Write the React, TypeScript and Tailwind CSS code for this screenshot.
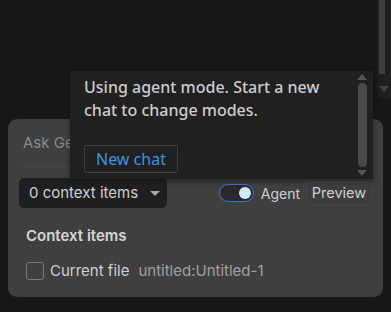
function Toggle() {
  return (
    <div className="w-[35px] h-[18px] rounded-full border-[1.5px] border-[#2f7ae5] bg-[#2a2a2a] flex items-center justify-end pr-[2px]">
      <div className="w-[12px] h-[12px] rounded-full bg-[#d4e8ff]" />
    </div>
  );
}

function Scrollbar() {
  return (
    <div className="flex flex-col items-center w-[12px] h-full py-[3px] gap-[3px]">
      <div className="w-0 h-0 border-l-[5px] border-r-[5px] border-b-[6px] border-l-transparent border-r-transparent border-b-[#555]" />
      <div className="flex-1 w-[9px] rounded-full bg-[#4a4a4a]" />
      <div className="w-0 h-0 border-l-[5px] border-r-[5px] border-t-[6px] border-l-transparent border-r-transparent border-t-[#555]" />
    </div>
  );
}

export default function App() {
  return (
    <div
      className="relative w-[391px] h-[312px] bg-[#181818] overflow-hidden"
      style={{ fontFamily: "Inter, 'Noto Sans', sans-serif" }}
    >
      {/* editor scrollbar on the right */}
      <div className="absolute right-0 top-0 w-[14px] h-[98px] bg-[#1f1f1f] flex flex-col items-center">
        <div className="w-[6px] h-[74px] bg-[#3e3e3e] ml-[-4px]" />
        <div className="mt-[12px] w-0 h-0 border-l-[5px] border-r-[5px] border-t-[6px] border-l-transparent border-r-transparent border-t-[#444]" />
      </div>

      {/* chat input panel */}
      <div className="pt-[119px] px-[8px]">
        <div className="w-[375px] h-[178px] rounded-[9px] bg-[#3f3f3f] px-[11px] pt-[13px]">
          <div className="text-[15px] text-[#8a8a8a] leading-[22px] pl-[4px] pb-[12px] border-b border-[#474747]">
            Ask Gemini
          </div>
          <div className="flex items-center mt-[11px]">
            <div className="w-[148px] h-[30px] rounded-[5px] bg-[#1f1f1f] flex items-center justify-between pl-[10px] pr-[7px] text-[15px] text-[#d0d0d0]">
              <span>0 context items</span>
              <div className="w-0 h-0 border-l-[5px] border-r-[5px] border-t-[5px] border-l-transparent border-r-transparent border-t-[#aaa]" />
            </div>
            <div className="ml-auto flex items-center">
              <Toggle />
              <span className="ml-[7px] text-[14px] text-[#cfcfcf]">Agent</span>
              <div className="ml-[6px] h-[23px] w-[66px] rounded-[5px] border border-[#464646] bg-[#3d3d3d] flex items-center justify-center text-[14.5px] text-[#cfcfcf]">
                Preview
              </div>
            </div>
          </div>
          <div className="mt-[17px] pl-[7px] text-[15px] font-semibold text-[#d6d6d6]">Context items</div>
          <div className="mt-[12px] pl-[7px] flex items-center text-[15px]">
            <div className="w-[18px] h-[18px] rounded-[3px] border-[1.5px] border-[#7a7a7a]" />
            <span className="ml-[6px] text-[#cfcfcf]">Current file</span>
            <span className="ml-[9px] text-[#a0a0a0]">untitled:Untitled-1</span>
          </div>
        </div>
      </div>

      {/* tooltip */}
      <div
        className="absolute left-[70px] top-[71px] w-[303px] h-[108px] bg-[#202020] flex shadow-[0_2px_6px_rgba(0,0,0,0.4)]"
        style={{ fontFamily: "'Noto Sans', sans-serif" }}
      >
        <div className="flex-1 pl-[14px] pt-[5px]">
          <p className="text-[16px] font-medium leading-[23px] text-[#cccccc]">
            Using agent mode. Start a new chat to change modes.
          </p>
          <button className="mt-[23px] h-[28px] px-[11px] border border-[#3e3e3e] rounded-[2px] text-[16px] text-[#3a94e8] flex items-center">
            New chat
          </button>
        </div>
        <div className="pr-[5px]">
          <Scrollbar />
        </div>
      </div>
    </div>
  );
}
